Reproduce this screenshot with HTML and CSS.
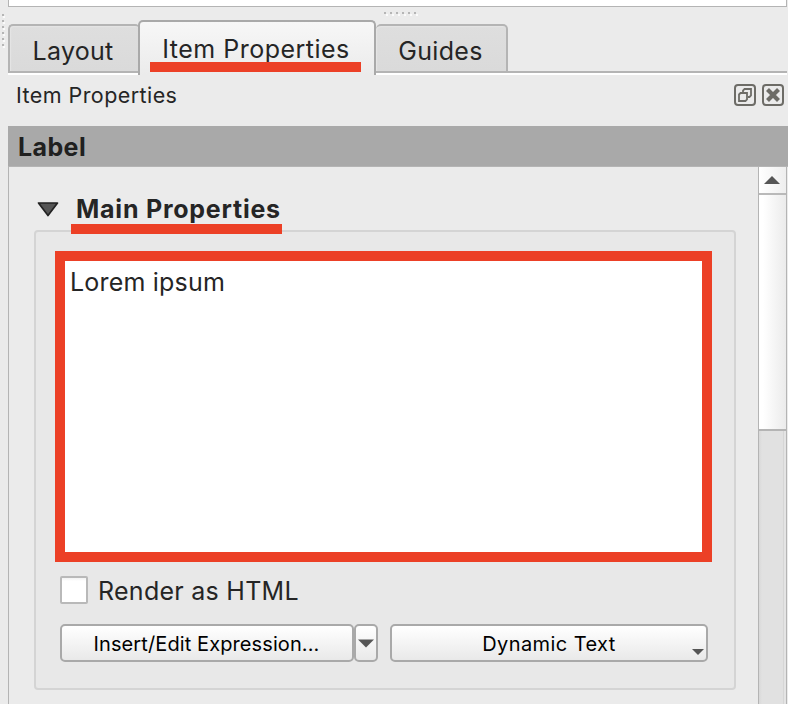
FILE: index.html
```html
<!DOCTYPE html>
<html lang="en">
<head>
<meta charset="utf-8">
<title>Item Properties</title>
<link rel="stylesheet" href="styles.css">
</head>
<body>
<div class="upper-panel"></div>
<svg class="grip grip-side" width="5" height="34"><path d="M4 2v32" stroke="#fafafa" stroke-width="2" stroke-dasharray="2 4"/><path d="M3 0v32" stroke="#b5b5b5" stroke-width="2" stroke-dasharray="2 4"/></svg>
<svg class="grip grip-top" width="35" height="5"><path d="M2 3h33" stroke="#fafafa" stroke-width="2" stroke-dasharray="2 4"/><path d="M0 1h32" stroke="#b5b5b5" stroke-width="2" stroke-dasharray="2 4"/></svg>
<nav class="tabs">
  <div class="tab tab-layout"><span class="t-layout">Layout</span></div>
  <div class="tab active"><span class="t-item">Item Properties</span><i class="mark"></i></div>
  <div class="tab tab-guides"><span class="t-guides">Guides</span></div>
  <div class="tab-rest"></div>
</nav>
<header class="dock-title">
  <span class="t-dock">Item Properties</span>
  <div class="dock-buttons">
    <svg width="22" height="22" viewBox="0 0 22 22" fill="none" stroke="#6d6c67" stroke-width="2"><rect x="1" y="1" width="20" height="20" rx="3"/><path d="M5 10.5L6.5 9H13v6.500L11.500 17H5zM9 8V6.500L10.500 5H17v6.500L15.500 13H14" stroke-width="1.8"/></svg>
    <svg width="22" height="22" viewBox="0 0 22 22" fill="none" stroke="#6d6c67" stroke-width="2"><rect x="1" y="1" width="20" height="20" rx="3"/><path d="M5.500 5.500L16.500 16.500M16.500 5.500L5.500 16.500" stroke-width="4.200"/></svg>
  </div>
</header>
<h1 class="item-name"><span class="t-label">Label</span></h1>
<main class="scroll-area">
  <section class="content">
    <div class="section-head">
      <svg width="22" height="15" viewBox="0 0 22 15"><path d="M1.5 1h19L11 13.5z" fill="#555" stroke="#222" stroke-width="1.7" stroke-linejoin="round"/></svg>
      <h2><span class="t-main">Main Properties</span><i class="mark"></i></h2>
    </div>
    <div class="group">
      <div class="text-box"><span class="t-lorem">Lorem ipsum</span></div>
      <label class="check-row"><i class="checkbox"></i><span class="t-render">Render as HTML</span></label>
      <div class="buttons">
        <div class="button insert"><span class="t-insert">Insert/Edit Expression...</span></div>
        <div class="button drop"><svg width="16" height="9"><path d="M0 .5h16L8 8.5z" fill="#555"/></svg></div>
        <div class="button dynamic"><span class="t-dynamic">Dynamic Text</span><svg class="menu-arrow" width="12" height="6"><path d="M0 0h12L6 6z" fill="#555"/></svg></div>
      </div>
    </div>
  </section>
  <div class="scrollbar">
    <div class="scroll-up"><svg width="16" height="8"><path d="M0 8L8 0l8 8z" fill="#555"/></svg></div>
    <div class="thumb"></div>
    <div class="track"></div>
  </div>
</main>
</body>
</html>
```
FILE: styles.css
```css
* { box-sizing: border-box; }
body {
  margin: 0;
  width: 788px;
  height: 704px;
  overflow: hidden;
  position: relative;
  background: #ebebeb;
  color: #252525;
  font-family: Inter, "Liberation Sans", sans-serif;
  font-size: 25px;
  line-height: 30px;
  display: flex;
  flex-direction: column;
}
span { white-space: nowrap; }
svg, i { display: block; }
.upper-panel {
  height: 7px;
  margin-left: 8px;
  margin-right: 1px;
  background: #fff;
  border: solid #b4b4b4;
  border-width: 0 1px 1px;
}
.grip { position: absolute; }
.grip-side { left: 0; top: 14px; }
.grip-top { left: 384px; top: 12px; }

.tabs {
  display: flex;
  align-items: flex-end;
  height: 55px;
  margin: 13px 1px 0 8px;
}
.tab {
  padding-top: 10px;
  display: flex;
  justify-content: center;
  background: linear-gradient(#dedede, #dadada) padding-box;
  border: 2px solid #b4b4b4;
  border-radius: 5px 5px 0 0;
}
.tab:not(.active) { height: 49px; margin-bottom: 2px; box-shadow: inset 1px 1px 1px #e5e5e5, 0 2px #fff; }
.tab-layout { width: 132px; border-right: 0; padding-right: 4px; }
.tab.active {
  width: 238px;
  height: 55px;
  margin-left: -2px;
  flex-direction: column;
  align-items: center;
  background: linear-gradient(#f7f7f7, #ebebeb) padding-box;
  border-color: #a9a9a9;
  border-bottom: 0;
  padding-top: 12px;
  justify-content: flex-start;
  z-index: 1;
}
.tab.active span { margin-right: 2px; height: 28px; }
.mark { background: #ec4026; height: 10px; }
.tab .mark { width: 211px; margin-right: 4px; flex: none; }
.tab-guides { width: 132px; border-left: 0; padding-right: 1px; }
.tab-rest { flex: 1; height: 4px; background: linear-gradient(#b4b4b4 50%, #fff 50%); }

.t-layout { letter-spacing: .25px; }
.t-item { letter-spacing: .48px; }
.t-guides { letter-spacing: .3px; }
.t-dock { letter-spacing: .43px; }
.t-label { letter-spacing: .4px; }
.t-main { letter-spacing: .77px; }
.t-lorem { letter-spacing: .2px; }
.t-render { letter-spacing: .27px; }
.t-insert { letter-spacing: .1px; }
.t-dynamic { letter-spacing: .42px; }

.dock-title {
  display: flex;
  height: 51px;
  padding: 5px 4px 0 16px;
  justify-content: space-between;
  font-size: 21.5px;
}
.dock-buttons { display: flex; gap: 6px; padding-top: 4px; }

h1, h2 { margin: 0; font-size: 25px; font-weight: 700; }
.item-name {
  height: 41px;
  margin-left: 8px;
  padding: 6px 0 0 10px;
  background: #a9a9a9;
  border-bottom: 1px solid #b4b4b4;
  color: #202020;
}
.scroll-area {
  flex: 1;
  display: flex;
  margin-left: 8px;
  margin-right: 1px;
  border-left: 1px solid #b4b4b4;
}
.content { width: 749px; padding-top: 27px; }
.section-head { display: flex; height: 40px; padding-left: 28px; position: relative; }
.section-head svg { margin-top: 8px; }
h2 { padding-left: 12px; }
h2 span { display: block; margin-left: 5px; height: 30px; }
h2 .mark { width: 211px; }
.group {
  width: 702px;
  height: 460px;
  margin: -4px 0 0 25px;
  padding: 19px 22px 0 19px;
  background: #e8e8e8;
  border: 2px solid #d4d4d4;
  border-radius: 4px;
}
.text-box {
  width: 657px;
  height: 311px;
  border: 10px solid #ec4026;
  background: #fff;
  padding: 6px 5px;
}
.check-row { display: flex; height: 28px; margin: 14px 0 0 5px; }
.checkbox {
  width: 28px;
  height: 28px;
  border: 2px solid #b9b9b9;
  border-radius: 2px;
  background: linear-gradient(#f2f2f2, #fff 3px);
  margin-right: 10px;
}
.buttons { display: flex; margin: 20px 0 0 5px; font-size: 20px; color: #000; }
.button {
  height: 38px;
  border: 2px solid #a9a9a9;
  border-radius: 5px;
  background: linear-gradient(#fff, #e9e9e9);
  display: flex;
  align-items: center;
  justify-content: center;
  position: relative;
}
.button span { padding-top: 2px; }
.insert { width: 294px; padding-right: 1px; }
.drop { width: 24px; }
.dynamic { width: 318px; margin-left: 12px; }
.menu-arrow { position: absolute; right: 2px; bottom: 5px; }

.scrollbar {
  width: 29px;
  border: solid #b4b4b4;
  border-width: 0 1px;
  display: flex;
  flex-direction: column;
}
.scroll-up { height: 28px; display: flex; justify-content: center; padding: 9px 2px 0 0; background: linear-gradient(90deg, #fff, #eee); border-bottom: 2px solid #b9b9b9; }
.thumb { height: 236px; background: linear-gradient(90deg, #fff 15%, #ebebeb); border-bottom: 2px solid #b4b4b4; }
.track { flex: 1; background: linear-gradient(90deg, #d8d8d8, #e1e1e1 3px, #e1e1e1 24px, #d6d6d6 24px, #d6d6d6 25px, #e4e4e4 25px); }
```
